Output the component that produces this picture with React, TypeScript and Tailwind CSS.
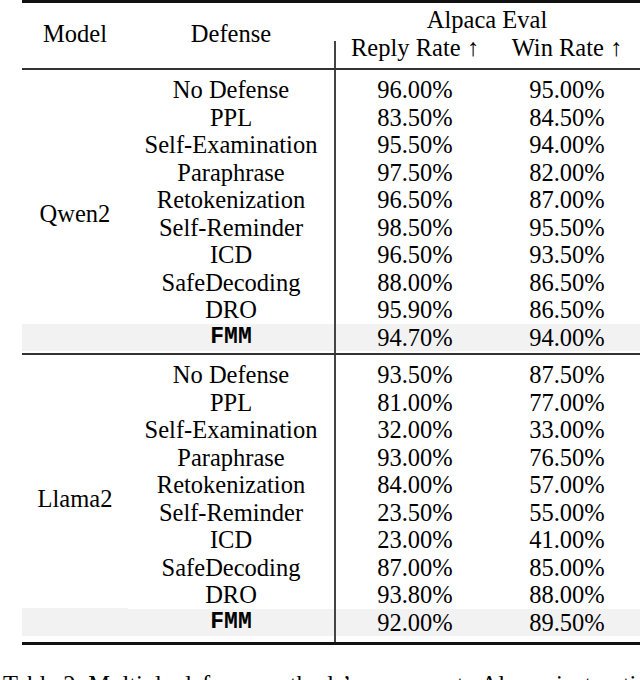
import React from "react";

const groups = [
  {
    model: "Qwen2",
    rows: [
      ["No Defense", "96.00%", "95.00%"],
      ["PPL", "83.50%", "84.50%"],
      ["Self-Examination", "95.50%", "94.00%"],
      ["Paraphrase", "97.50%", "82.00%"],
      ["Retokenization", "96.50%", "87.00%"],
      ["Self-Reminder", "98.50%", "95.50%"],
      ["ICD", "96.50%", "93.50%"],
      ["SafeDecoding", "88.00%", "86.50%"],
      ["DRO", "95.90%", "86.50%"],
      ["FMM", "94.70%", "94.00%"],
    ],
  },
  {
    model: "Llama2",
    rows: [
      ["No Defense", "93.50%", "87.50%"],
      ["PPL", "81.00%", "77.00%"],
      ["Self-Examination", "32.00%", "33.00%"],
      ["Paraphrase", "93.00%", "76.50%"],
      ["Retokenization", "84.00%", "57.00%"],
      ["Self-Reminder", "23.50%", "55.00%"],
      ["ICD", "23.00%", "41.00%"],
      ["SafeDecoding", "87.00%", "85.00%"],
      ["DRO", "93.80%", "88.00%"],
      ["FMM", "92.00%", "89.50%"],
    ],
  },
];

const Cell = ({ children, ours }: { children: React.ReactNode; ours?: boolean }) => (
  <div className={`h-[27.5px] flex items-center justify-center whitespace-nowrap ${ours ? "bg-[#f2f2f2]" : ""}`}>
    {children}
  </div>
);

const Group = ({ model, rows, pb }: { model: string; rows: string[][]; pb: string }) => (
  <div className="flex items-stretch">
    <div className={`w-[106px] pt-[6px] ${pb}`}>
      <div className="h-[275px] flex items-center justify-center bg-[linear-gradient(to_top,#f2f2f2_27.5px,transparent_27.5px)]">
        {model}
      </div>
    </div>
    <div className={`w-[206px] pt-[6px] ${pb} flex flex-col`}>
      {rows.map((r) => (
        <Cell key={r[0]} ours={r[0] === "FMM"}>
          {r[0] === "FMM" ? (
            <span className="font-['Liberation_Mono',monospace] font-bold text-[23px]">FMM</span>
          ) : (
            r[0]
          )}
        </Cell>
      ))}
    </div>
    <div className="w-[2px] bg-[#444]" />
    <div className={`w-[158px] pt-[6px] ${pb} flex flex-col`}>
      {rows.map((r) => (
        <Cell key={r[0]} ours={r[0] === "FMM"}>{r[1]}</Cell>
      ))}
    </div>
    <div className={`w-[146px] pt-[6px] ${pb} flex flex-col`}>
      {rows.map((r) => (
        <Cell key={r[0]} ours={r[0] === "FMM"}>{r[2]}</Cell>
      ))}
    </div>
  </div>
);

export default function App() {
  return (
    <div className="w-[640px] h-[680px] overflow-hidden bg-white text-black font-['Liberation_Serif',serif] text-[24.5px] leading-[27.5px]">
      <div className="ml-[22px] w-[618px] flex flex-col">
        <div className="h-[3px] bg-[#111]" />
        {/* header */}
        <div className="flex h-[65px]">
          <div className="w-[106px] pt-[3px] pb-[7px]">
            <div className="h-[55px] flex items-center justify-center">Model</div>
          </div>
          <div className="w-[206px] pt-[3px] pb-[7px]">
            <div className="h-[55px] flex items-center justify-center">Defense</div>
          </div>
          <div className="w-[306px] pt-[3px] flex flex-col">
            <div className="h-[27.5px] flex items-center justify-center">Alpaca Eval</div>
            <div className="flex flex-1">
              <div className="w-[2px] mt-[7.5px] bg-[#444]" />
              <div className="w-[158px] h-[27.5px] flex items-center justify-center whitespace-nowrap">Reply Rate ↑</div>
              <div className="w-[146px] h-[27.5px] flex items-center justify-center whitespace-nowrap">Win Rate ↑</div>
            </div>
          </div>
        </div>
        <div className="h-[2px] bg-[#333]" />
        <Group model={groups[0].model} rows={groups[0].rows} pb="pb-[2px]" />
        <div className="h-[2px] bg-[#333]" />
        <Group model={groups[1].model} rows={groups[1].rows} pb="pb-[6px]" />
        <div className="h-[3px] bg-[#111]" />
      </div>
      <p className="mt-[26px] ml-[3px] whitespace-nowrap">
        Table 2: Multiple defense methods’ responses to Alpaca instructions.
      </p>
    </div>
  );
}
